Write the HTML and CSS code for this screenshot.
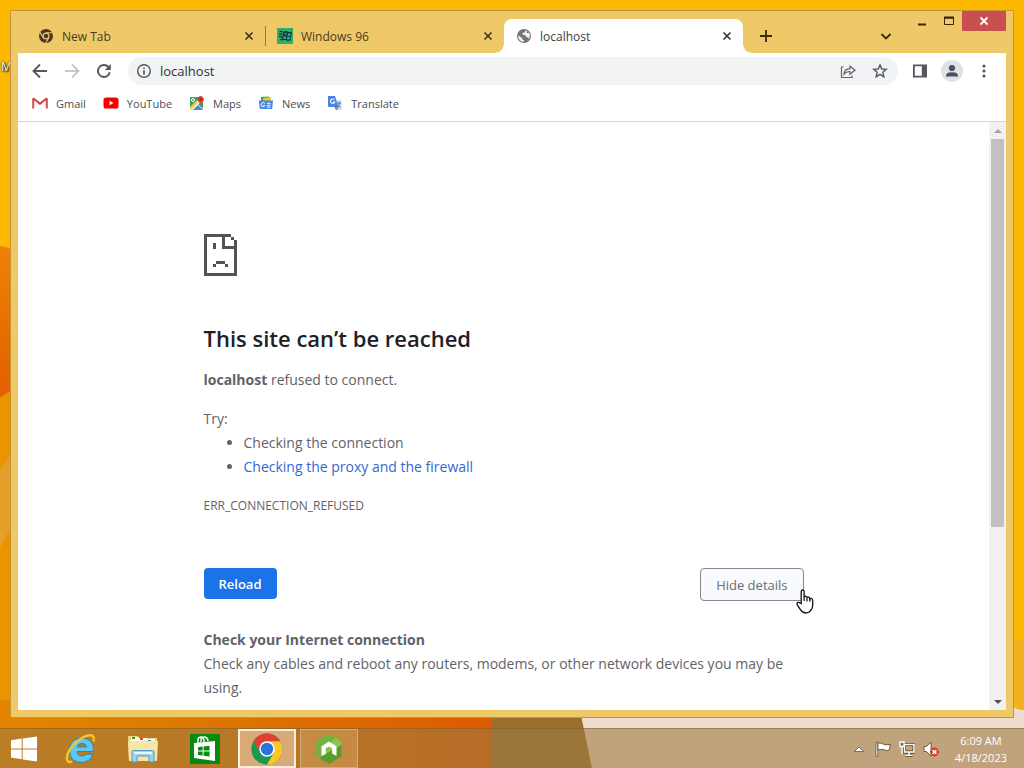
FILE: index.html
```html
<!DOCTYPE html>
<html lang="en">
<head>
    <meta charset="UTF-8">
    <meta name="viewport" content="width=device-width, initial-scale=1.0">
    <title>localhost</title>
    <link rel="stylesheet" href="styles.css">
</head>
<body>
    <!-- Wallpaper -->
    <svg class="wallpaper" viewBox="0 0 1024 768" preserveAspectRatio="none" aria-hidden="true">
        <defs>
            <linearGradient id="ember" x1="0" y1="0" x2="0" y2="1">
                <stop offset="0" stop-color="#ee8205"/>
                <stop offset="1" stop-color="#e25f00"/>
            </linearGradient>
            <linearGradient id="floor" x1="0" y1="0" x2="1" y2="0">
                <stop offset="0" stop-color="#e48500"/>
                <stop offset=".5" stop-color="#dc7400"/>
                <stop offset="1" stop-color="#dc5a00"/>
            </linearGradient>
        </defs>
        <rect width="1024" height="768" fill="#fdb900"/>
        <path d="M0 246Q8 246 14 252V390L0 398Z" fill="url(#ember)"/>
        <path d="M0 398L14 388V768H0Z" fill="#ea9400"/>
        <path d="M0 470L14 450V520L0 548Z" fill="#e5a02c"/>
        <path d="M0 700H492V768H0Z" fill="url(#floor)"/>
        <path d="M492 700H578L592 768H492Z" fill="#9a7030"/>
        <path d="M578 700H1024V768H592Z" fill="#f0dccd"/>
        <path d="M1008 640H1024V710Q1014 710 1008 702Z" fill="#f2b21c"/>
    </svg>
    <span class="desktop-label">M</span>

    <!-- Browser window -->
    <div class="window">
        <header class="titlebar">
            <div class="tabs">
                <div class="tab">
                    <svg class="icon" viewBox="0 0 16 16"><circle cx="8" cy="8" r="7" fill="#4b3a23"/><circle cx="8" cy="8" r="2.9" fill="#4b3a23" stroke="#eec868" stroke-width="1.2"/><path d="M8 4.7H14.2M5.2 9.7L2 4.4M10.8 9.7L7.8 14.8" stroke="#eec868" stroke-width="1.1"/></svg>
                    <span class="tab-title">New Tab</span>
                    <button class="tab-close" aria-label="Close New Tab"><svg viewBox="0 0 10 10"><path d="M1.5 1.5L8.5 8.5M8.5 1.5L1.5 8.5"/></svg></button>
                </div>
                <div class="tab divided">
                    <svg class="icon" viewBox="0 0 16 16"><rect width="16" height="16" fill="#2fae68"/><path d="M6.5 4Q9 2.3 11 3.8Q12.8 4.8 15 3.6L13.4 12.2Q11.2 13.4 9.2 12.2Q7.4 11 4.8 12.4Z" fill="#0f2f2c"/><path d="M7.3 5Q8.8 4.1 10 4.8L9.5 7.4Q8.2 6.8 6.8 7.5Z" fill="#1e8454"/><path d="M11 5.2Q12.4 5.8 13.8 5.1L13.3 7.7Q11.8 8.3 10.5 7.7ZM10.3 8.6Q11.8 9.2 13.1 8.6L12.6 11.2Q11.1 11.9 9.8 11.2ZM6.6 8.6Q8 7.9 9.3 8.4L8.8 11Q7.4 10.4 6.1 11.2Z" fill="#1cb39a"/><path d="M2.5 3.5Q4.5 3 6 4.5M2 6Q4 5.5 5.6 7M1.8 8.5Q3.6 8 5.2 9.5M3 11.5L5 11.9" fill="none" stroke="#123b35" stroke-width="1.1"/></svg>
                    <span class="tab-title">Windows 96</span>
                    <button class="tab-close" aria-label="Close Windows 96"><svg viewBox="0 0 10 10"><path d="M1.5 1.5L8.5 8.5M8.5 1.5L1.5 8.5"/></svg></button>
                </div>
                <div class="tab active">
                    <svg class="icon" viewBox="0 0 16 16"><circle cx="8" cy="8" r="7" fill="#737579"/><path d="M2.4 7.4L6.3 10.2V11.6L8 12.2V13.8Q3 13.6 2.2 9ZM9.5 2.4L8.6 4.4L6.4 5L6.8 6.8L9.6 7.2L10.4 9.2H12.2L12.8 11.2Q15 7.4 12.8 4.4L11.3 5.6L10.6 4.4L11.3 3.2Z" fill="#f1f2f3"/></svg>
                    <span class="tab-title">localhost</span>
                    <button class="tab-close" aria-label="Close localhost"><svg viewBox="0 0 10 10"><path d="M1.5 1.5L8.5 8.5M8.5 1.5L1.5 8.5"/></svg></button>
                </div>
            </div>
            <button class="new-tab" aria-label="New tab"><svg viewBox="0 0 12 12"><path d="M6 0V12M0 6H12"/></svg></button>
            <button class="tab-search" aria-label="Search tabs"><svg viewBox="0 0 12 12"><path d="M1.5 4L6 8.5L10.5 4"/></svg></button>
            <div class="window-controls">
                <button aria-label="Minimize"><svg viewBox="0 0 12 12"><path d="M2 9.5H10" stroke="#3b2208" stroke-width="2"/></svg></button>
                <button aria-label="Maximize"><svg viewBox="0 0 12 12"><path d="M1.5 9.5V3H10.5V9.5Z" fill="none" stroke="#3b2208"/><path d="M1 2.5H11" stroke="#3b2208" stroke-width="2"/></svg></button>
                <button class="close" aria-label="Close"><svg viewBox="0 0 12 12"><path d="M2.5 2.5L9.5 9.5M9.5 2.5L2.5 9.5" stroke="#fff" stroke-width="1.8"/></svg></button>
            </div>
        </header>

        <div class="toolbar">
            <button aria-label="Back"><svg viewBox="0 0 16 16"><path d="M15 8H2M8 1.5L1.5 8L8 14.5" fill="none" stroke="#55585c" stroke-width="1.8"/></svg></button>
            <button aria-label="Forward"><svg viewBox="0 0 16 16"><path d="M1 8H14M8 1.5L14.5 8L8 14.5" fill="none" stroke="#b9bbbd" stroke-width="1.6"/></svg></button>
            <button aria-label="Reload"><svg viewBox="0 0 16 16"><path d="M13.8 9.2A6 6 0 1 1 12.4 4" fill="none" stroke="#55585c" stroke-width="1.9"/><path d="M14.8 1V7H8.8Z" fill="#55585c"/></svg></button>
            <div class="omnibox">
                <button aria-label="Site information"><svg viewBox="0 0 16 16"><circle cx="8" cy="8" r="6.3" fill="none" stroke="#55585c" stroke-width="1.4"/><path d="M8 7.2V11.8M8 4.4V6" stroke="#55585c" stroke-width="1.6"/></svg></button>
                <input type="text" value="localhost" aria-label="Address">
                <button aria-label="Share"><svg viewBox="0 0 16 16"><path d="M3.5 4H1.5V14.5H12V12.5M4 11Q4.5 6 10 5.7V3L15 7.2L10 11.2V8.6Q6.2 8.3 4 11Z" fill="none" stroke="#606367" stroke-width="1.2"/></svg></button>
                <button aria-label="Bookmark this page"><svg viewBox="0 0 16 16"><path d="M8 1.9L9.8 6L14.2 6.4L10.9 9.3L11.9 13.7L8 11.4L4.1 13.7L5.1 9.3L1.8 6.4L6.2 6Z" fill="none" stroke="#55585c" stroke-width="1.4"/></svg></button>
            </div>
            <button aria-label="Side panel"><svg viewBox="0 0 16 16"><path d="M1 1.5H15V14.5H1ZM2.8 3.3V12.7H9.8V3.3Z" fill="#55585c" fill-rule="evenodd"/></svg></button>
            <button class="avatar" aria-label="Profile"><svg viewBox="0 0 22 22"><circle cx="11" cy="11" r="11" fill="#dfe1e6"/><circle cx="11" cy="8" r="3.1" fill="#4b5064"/><path d="M5 16.5V15.6Q5 12.2 11 12.2Q17 12.2 17 15.6V16.5Z" fill="#4b5064"/></svg></button>
            <button aria-label="Menu"><svg viewBox="0 0 16 16"><g fill="#55585c"><circle cx="8" cy="3" r="1.6"/><circle cx="8" cy="8" r="1.6"/><circle cx="8" cy="13" r="1.6"/></g></svg></button>
        </div>

        <nav class="bookmarks">
            <a href="#"><svg class="icon" viewBox="0 0 16 16"><path d="M1.2 13.5V3.5" stroke="#d9485a" stroke-width="2"/><path d="M14.8 13.5V3.5" stroke="#d9485a" stroke-width="2"/><path d="M1 3.2L8 8.7L15 3.2" fill="none" stroke="#d93b3b" stroke-width="2"/></svg>Gmail</a>
            <a href="#"><svg class="icon" viewBox="0 0 16 16"><rect x=".5" y="2.5" width="15" height="11" rx="2.6" fill="#f60000"/><path d="M6.5 5.8L10.5 8L6.5 10.2Z" fill="#fff"/></svg>YouTube</a>
            <a href="#"><svg class="icon" viewBox="0 0 16 16"><rect x="1" y="2" width="13" height="13" rx="1" fill="#35a556"/><path d="M3 15L9 8.5L14 14V15Z" fill="#4a85ea"/><path d="M1 13L10 4L12.5 6.5L4 15H1.5Z" fill="#f4f4f4"/><path d="M1 12L7 6L9 8L2 15L1 14Z" fill="#f8cc43"/><path d="M8.6 9.2L14 14.5" stroke="#e8e8e8"/><path d="M11.5 11Q11.3 8.4 9 6.2A3.2 3.2 0 1 1 14.2 6.2Q11.8 8.4 11.5 11Z" fill="#df4334"/><circle cx="11.6" cy="4.2" r="1.2" fill="#9c251c"/><circle cx="4" cy="5" r="1.5" fill="none" stroke="#fff"/></svg>Maps</a>
            <a href="#"><svg class="icon" viewBox="0 0 16 16"><path d="M3 2L11 1.5V7H3Z" fill="#31a354"/><path d="M5 3L13 2V8H5Z" fill="#ecbf3a"/><path d="M.8 5.5H15L14.2 14H1.8Z" fill="#4a86e8"/><path d="M6.8 8.5A2 2 0 1 0 7 10.4H5.4M9 8.3H12.5M9 10.3H12.5M9 12.2H12.5" fill="none" stroke="#fff"/></svg>News</a>
            <a href="#"><svg class="icon" viewBox="0 0 16 16"><path d="M6 5H14.5V15H9.5Z" fill="#d8dde5"/><path d="M1 1H8L11.2 12H2Q1 12 1 11Z" fill="#4a82e4"/><path d="M7.3 4.8A2.2 2.2 0 1 0 7.7 7H5.8" fill="none" stroke="#fff" stroke-width="1.1"/><path d="M9.5 8H14M11.8 7V8M13 8Q12.5 11 9.8 12.3M10.5 9.3Q11.5 11.6 13.6 12.3M8 12H11L9.5 15Z" fill="none" stroke="#4777cb"/></svg>Translate</a>
        </nav>

        <div class="viewport">
            <main class="page">
                <div class="error">
                    <svg class="sad-page" viewBox="0 0 11 14" shape-rendering="crispEdges" aria-hidden="true"><path d="M0 0H9V1H10V2H11V14H0ZM1 1V13H10V5H6V1ZM7 1V4H10V2H9V1Z" fill="#535353" fill-rule="evenodd"/><path d="M3 3H4V5H3ZM4 9H7V10H4ZM3 10H4V11H3ZM7 10H8V11H7Z" fill="#535353"/></svg>
                    <h1>This site can’t be reached</h1>
                    <p><strong>localhost</strong> refused to connect.</p>
                    <p class="try">Try:</p>
                    <ul>
                        <li>Checking the connection</li>
                        <li><a href="#">Checking the proxy and the firewall</a></li>
                    </ul>
                    <p class="error-code">ERR_CONNECTION_REFUSED</p>
                    <div class="actions">
                        <button class="reload">Reload</button>
                        <button class="details-btn">Hide details
                            <svg class="cursor" viewBox="0 0 18 25" aria-hidden="true"><path d="M5.2 14.6V2.5Q5.2 1 6.7 1Q8.1 1 8.1 2.5V8Q8.5 7 9.7 7.3Q11 7.6 11 8.8Q11.5 7.8 12.7 8.2Q13.9 8.6 13.9 9.8Q14.5 9 15.6 9.5Q16.7 10 16.7 11.3V16Q16.7 19 15 21Q13.3 24 9.8 24Q6.2 23.8 4.2 20.3L1.2 15.6Q.5 14 2 13.4Q3.4 13 4.2 14Z" fill="#fff" stroke="#111" stroke-width="1.3"/><path d="M8.1 8V12M11 8.8V12.4M13.9 9.8V12.8" stroke="#111" stroke-width="1.2"/></svg>
                        </button>
                    </div>
                    <h2>Check your Internet connection</h2>
                    <p class="hint">Check any cables and reboot any routers, modems, or other network devices you may be using.</p>
                </div>
            </main>
            <div class="scrollbar">
                <span class="arrow up"></span>
                <div class="track"><div class="thumb"></div></div>
                <span class="arrow down"></span>
            </div>
        </div>
    </div>

    <!-- Taskbar -->
    <footer class="taskbar">
        <button class="start" aria-label="Start"><svg viewBox="0 0 28 26"><path d="M1 4.2L11.7 2.6V12.4H1ZM12.7 2.4L27 .4V12.4H12.7ZM1 13.5H11.7V23.2L1 21.6ZM12.7 13.5H27V25.6L12.7 23.4Z" fill="#fff"/></svg></button>
        <button class="task" aria-label="Internet Explorer"><svg viewBox="0 0 32 32"><path d="M28.5 18.5H12Q12.4 23 16.8 23Q19.8 23 21.2 21.2H28Q25 29.4 16.4 29.4Q4.6 29.2 4.6 17.4Q4.6 5.4 16.6 5Q29.2 5.4 28.5 18.5ZM12.2 14H21.6Q21.2 10.4 16.9 10.4Q12.7 10.6 12.2 14Z" fill="#5fc8f2" stroke="#1c83bb" stroke-width=".9"/><path d="M28.5 8.5Q30.2 2 25 2.2Q19 2.4 11 9.5Q3 17 1.9 24Q1.3 30.2 7.2 28.7" fill="none" stroke="#f5c52f" stroke-width="2.4"/></svg></button>
        <button class="task" aria-label="File Explorer"><svg viewBox="0 0 32 32"><path d="M1 3H10L12 5H30V28H2Z" fill="#ead486"/><path d="M4 4H12V8H4ZM12 5H20V9H12ZM20 6H28V10H20Z" fill="#fffbe5"/><path d="M5 4H8V6H5Z" fill="#1e9a38"/><path d="M13 5H16V7H13Z" fill="#d44a2b"/><path d="M21 7H24V9H21Z" fill="#3a79c8"/><path d="M1 8H31L30 28H2Z" fill="#f5e6a5"/><path d="M5 29V19Q5 17.5 6.5 17.5H25.5Q27 17.5 27 19V29H22V23H10V29Z" fill="#9fd0ec" stroke="#559ac2"/><path d="M7 20H25" stroke="#e6f7ff" stroke-width="2"/></svg></button>
        <button class="task" aria-label="Store"><svg viewBox="0 0 32 32"><rect x="1" y="1" width="30" height="30" fill="#078a11"/><path d="M5 10L26 8V28L5 25Z" fill="#fff"/><path d="M9 10V7Q9 4 12 4Q14 4 15 7V9M12 9V6Q13 3.5 16 4Q19 5 19 8" fill="none" stroke="#fff" stroke-width="1.4"/><path d="M9 14.2L13.6 13.6V17.6H9ZM14.6 13.5L20.5 12.7V17.6H14.6ZM9 18.6H13.6V22.6L9 22ZM14.6 18.6H20.5V23.5L14.6 22.7Z" fill="#078a11"/></svg></button>
        <button class="task running focused" aria-label="Google Chrome"><svg viewBox="0 0 32 32"><circle cx="16" cy="16" r="15.5" fill="#1c9a4c"/><path d="M16 16L2.6 8.2A15.5 15.5 0 0 1 29.4 8.3H16Z" fill="#de4032"/><path d="M16 8.3H29.4A15.5 15.5 0 0 1 15.8 31.5L22.7 19.8Z" fill="#fbc827"/><path d="M2.6 8.2L9.3 19.8L16 16L15 8.3Z" fill="#de4032"/><path d="M2.6 8.2L9.3 19.8Q12 23.8 16 23.7L22.7 19.8L15.8 31.5A15.5 15.5 0 0 1 2.6 8.2Z" fill="#1c9a4c"/><circle cx="16" cy="16" r="7.7" fill="#fff"/><circle cx="16" cy="16" r="6.2" fill="#2972e0"/></svg></button>
        <button class="task running" aria-label="Node"><svg viewBox="0 0 32 32"><path d="M16 1L28.5 8V23.5L16 31L3.5 23.5V8Z" fill="#5a9a2e"/><path d="M16 1L28.5 8V12L4 26L3.5 8Z" fill="#8bc34f"/><path d="M16 1L22 4.4L7 26L3.5 23.5V8Z" fill="#74b13d"/><path d="M8.5 23V13.2L16 8.5L23.5 13.2V23L19.2 20.8V15.5L16 13.6L12.8 15.5V20.8Z" fill="#fff"/></svg></button>
        <div class="tray">
            <svg viewBox="0 0 16 16"><path d="M3.5 10.5L8 6L12.5 10.5Z" fill="#fff" stroke="#6b5836" stroke-width=".8"/></svg>
            <svg viewBox="0 0 16 16"><path d="M1 1V15.5H2.8V1Z" fill="#fff" stroke="#55421f" stroke-width=".7"/><path d="M3 2.2Q6 1.5 8.5 3.2Q11.5 4.5 15.5 3.4L14 9.2Q11.5 10 9 8.8Q6 7.8 3 9Z" fill="#fff" stroke="#55421f" stroke-width=".8"/></svg>
            <svg viewBox="0 0 16 16"><path d="M5.5 3.5H15V11H5.5ZM10 11V14M6.5 14.2H13.5" fill="none" stroke="#55421f" stroke-width="3"/><path d="M5.5 3.5H15V11H5.5ZM10 11V14M6.5 14.2H13.5" fill="none" stroke="#fff" stroke-width="1.5"/><path d="M1 1H5V5.5H1ZM3 5.5V13" fill="#846a3c" stroke="#fff" stroke-width="1.3"/></svg>
            <svg viewBox="0 0 16 16"><path d="M1 5.5H3.5L8 1V15L3.5 10.5H1Z" fill="#fff" stroke="#55421f" stroke-width=".8"/><circle cx="11.5" cy="11" r="4.4" fill="#d93b30"/><path d="M9.6 9.1L13.4 12.9M13.4 9.1L9.6 12.9" stroke="#fff" stroke-width="1.5"/></svg>
        </div>
        <div class="clock"><span>6:09 AM</span><span>4/18/2023</span></div>
    </footer>
</body>
</html>
```
FILE: styles.css
```css
* {
    box-sizing: border-box;
}

body {
    margin: 0;
    height: 100vh;
    display: flex;
    flex-direction: column;
    overflow: hidden;
    position: relative;
    font-family: "Open Sans", "Noto Sans", sans-serif;
    font-size: 12px;
    color: #3c4043;
}

button {
    display: flex;
    align-items: center;
    justify-content: center;
    padding: 0;
    border: none;
    background: none;
    font-family: inherit;
    cursor: pointer;
}

svg {
    flex: none;
    display: block;
}

/* Desktop */
.wallpaper {
    position: absolute;
    inset: 0;
    width: 100%;
    height: 100%;
    z-index: -1;
}

.desktop-label {
    position: absolute;
    left: 1px;
    top: 58px;
    color: #fff;
    text-shadow: 0 0 2px #000, 1px 1px 2px #000;
}

/* Window */
.window {
    flex: 1;
    min-height: 0;
    position: relative;
    margin: 10px 10px 10px;
    padding: 0 7px 7px;
    display: flex;
    flex-direction: column;
    background: #efc968;
    border: 1px solid #c4933a;
}

.titlebar {
    height: 42px;
    flex: none;
    display: flex;
    align-items: flex-end;
    padding-left: 8px;
}

.tabs {
    display: flex;
    flex: 0 1 717px;
}

.tab {
    flex: 1;
    height: 34px;
    display: flex;
    align-items: center;
    gap: 8px;
    padding: 0 8px 0 12px;
    position: relative;
    color: #4b3a23;
}

.icon {
    width: 16px;
    height: 16px;
}

.tab.divided::before {
    content: "";
    position: absolute;
    left: 0;
    top: 7px;
    width: 1px;
    height: 20px;
    background: #957a3c;
}

.tab.active {
    background: #fff;
    color: #3c4043;
    border-radius: 8px 8px 0 0;
}

.tab.active::before,
.tab.active::after {
    content: "";
    position: absolute;
    bottom: 0;
    width: 8px;
    height: 8px;
}

.tab.active::before {
    left: -8px;
    background: radial-gradient(circle at 0 0, transparent 7px, #fff 8px);
}

.tab.active::after {
    right: -8px;
    background: radial-gradient(circle at 100% 0, transparent 7px, #fff 8px);
}

.tab-title {
    flex: 1;
}

.tab-close {
    width: 16px;
    height: 16px;
}

.tab-close svg {
    width: 10px;
    height: 10px;
    stroke: #3d3020;
    stroke-width: 1.6;
}

.new-tab,
.tab-search {
    width: 28px;
    height: 34px;
}

.new-tab {
    margin-left: 9px;
}

.tab-search {
    margin-left: auto;
    margin-right: 8px;
}

.new-tab svg,
.tab-search svg {
    width: 12px;
    height: 12px;
    fill: none;
    stroke: #3b2a10;
    stroke-width: 1.8;
}

.window-controls {
    display: flex;
    align-self: flex-start;
}

.window-controls button {
    width: 27px;
    height: 20px;
}

.window-controls .close {
    width: 44px;
    background: #c9504f;
}

.window-controls svg {
    width: 12px;
    height: 12px;
}

/* Toolbar */
.toolbar {
    flex: none;
    display: flex;
    align-items: center;
    height: 36px;
    padding: 0 6px;
    background: #fff;
}

.toolbar button {
    width: 32px;
    height: 28px;
}

.toolbar svg {
    width: 16px;
    height: 16px;
}

.toolbar .avatar svg {
    width: 22px;
    height: 22px;
}

.omnibox {
    flex: 1;
    display: flex;
    align-items: center;
    height: 28px;
    margin: 0 6px 0 8px;
    padding-right: 2px;
    background: #f1f3f4;
    border-radius: 14px;
}

.omnibox input {
    flex: 1;
    min-width: 0;
    padding: 0;
    border: none;
    outline: none;
    background: none;
    font-family: inherit;
    font-size: 13px;
    color: #303236;
}

/* Bookmarks bar */
.bookmarks {
    flex: none;
    display: flex;
    align-items: center;
    gap: 17px;
    height: 33px;
    padding: 0 14px 4px;
    background: #fff;
    border-bottom: 1px solid #d5d6d8;
    font-size: 11px;
}

.bookmarks a {
    display: flex;
    align-items: center;
    gap: 8px;
    color: #4a4d51;
    text-decoration: none;
}

/* Page */
.viewport {
    flex: 1;
    min-height: 0;
    display: flex;
    background: #fff;
}

.page {
    flex: 1;
    overflow: hidden;
    padding-top: 112px;
    color: #5f6368;
    font-size: 14px;
    line-height: 24px;
}

.error {
    max-width: 600px;
    margin: 0 auto;
}

.sad-page {
    width: 33px;
    height: 42px;
}

h1 {
    margin: 47px 0 15px;
    font-size: 22px;
    font-weight: 600;
    line-height: 30px;
    color: #202124;
}

.error p {
    margin: 0 0 15px;
}

.error .try {
    margin: 0;
}

.error ul {
    margin: 0 0 15px;
    padding-left: 40px;
}

.error li a {
    color: #3367d6;
    text-decoration: none;
}

.error .error-code {
    margin-bottom: 50px;
    font-size: 12px;
}

.actions {
    display: flex;
    justify-content: space-between;
    align-items: flex-start;
    margin-bottom: 27px;
}

.reload {
    height: 31px;
    padding: 0 15px;
    border-radius: 4px;
    background: #1a73e8;
    color: #fff;
    font-size: 13px;
    font-weight: 600;
}

.details-btn {
    position: relative;
    height: 33px;
    padding: 0 15px;
    border: 1px solid #85888c;
    border-radius: 4px;
    background: #f8fafd;
    color: #696d72;
    font-size: 13px;
}

/* Hand pointer lying over the button corner */
.cursor {
    position: absolute;
    right: -11px;
    bottom: -14px;
    width: 18px;
    height: 25px;
}

h2 {
    margin: 0;
    font-size: 14px;
    font-weight: 700;
    line-height: 24px;
}

/* Scrollbar */
.scrollbar {
    width: 17px;
    display: flex;
    flex-direction: column;
    background: #f1f1f1;
}

.arrow {
    height: 17px;
    display: flex;
    align-items: center;
    justify-content: center;
}

.arrow::before {
    content: "";
    border: 4px solid transparent;
}

.arrow.up::before {
    border-top: none;
    border-bottom-color: #a3a3a3;
}

.arrow.down::before {
    border-bottom: none;
    border-top-color: #505050;
}

.track {
    flex: 1;
    padding: 0 2px;
}

.thumb {
    height: 70%;
    background: #c1c1c1;
}

/* Taskbar */
.taskbar {
    flex: none;
    display: flex;
    align-items: stretch;
    gap: 4px;
    height: 40px;
    padding-right: 17px;
    background: rgba(157, 122, 66, 0.58);
    border-top: 1px solid rgba(110, 80, 30, 0.4);
}

.start {
    width: 48px;
}

.start svg {
    width: 28px;
    height: 26px;
}

.task {
    width: 58px;
    border: 1px solid transparent;
}

.task svg {
    width: 32px;
    height: 32px;
}

.task.running {
    border-color: #d0ac7b;
    background: rgba(235, 200, 150, 0.28);
}

.task.focused {
    border: 2px solid #fbeedb;
    background: rgba(240, 205, 175, 0.6);
}

.tray {
    display: flex;
    align-items: center;
    gap: 8px;
    margin-left: auto;
}

.tray svg {
    width: 16px;
    height: 16px;
}

.clock {
    display: flex;
    flex-direction: column;
    align-items: center;
    justify-content: center;
    margin-left: 12px;
    font-size: 11px;
    line-height: 17px;
    color: #fff;
}
```
